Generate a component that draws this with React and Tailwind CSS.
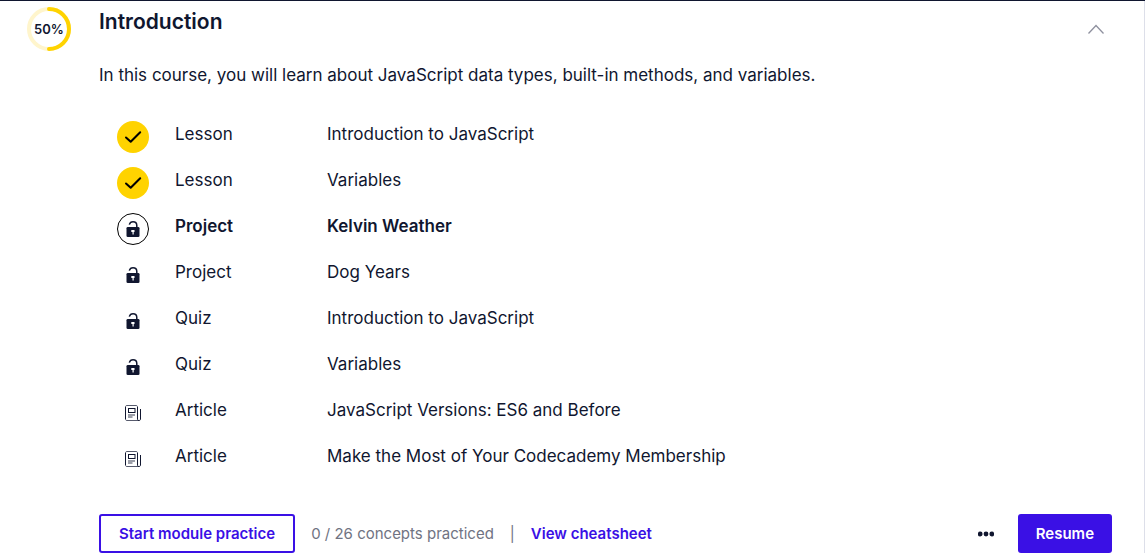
const items = [
  { kind: 'Lesson', title: 'Introduction to JavaScript', state: 'done' },
  { kind: 'Lesson', title: 'Variables', state: 'done' },
  { kind: 'Project', title: 'Kelvin Weather', state: 'current' },
  { kind: 'Project', title: 'Dog Years', state: 'open' },
  { kind: 'Quiz', title: 'Introduction to JavaScript', state: 'open' },
  { kind: 'Quiz', title: 'Variables', state: 'open' },
  { kind: 'Article', title: 'JavaScript Versions: ES6 and Before', state: 'article' },
  { kind: 'Article', title: 'Make the Most of Your Codecademy Membership', state: 'article' },
];

function ProgressRing() {
  return (
    <div className="grid size-11 shrink-0 place-items-center">
      <svg viewBox="0 0 44 44" className="col-start-1 row-start-1 size-11" fill="none" strokeWidth="4" aria-hidden="true">
        <circle cx="22" cy="22" r="20" stroke="#fff5cc" />
        <path d="M22 2a20 20 0 0 1 0 40" stroke="#ffd300" strokeLinecap="round" />
      </svg>
      <span className="col-start-1 row-start-1 text-[13px] leading-4 font-semibold">50%</span>
    </div>
  );
}

function LockIcon() {
  return (
    <svg viewBox="0 0 16 18" className="h-[18px] w-4" aria-hidden="true">
      <path d="M4.300 4.600C4.900 2.600 6.200 1.700 8 1.700c2.300 0 3.800 1.500 3.800 3.700V8" fill="none" stroke="#10162f" strokeWidth="1.500" />
      <rect x="1.500" y="7" width="13" height="10" rx="1.300" fill="#10162f" />
      <path d="M6.300 10h3.200v2h-.8v2.600H7.500V12H6.300z" fill="#fff" />
    </svg>
  );
}

function ArticleIcon() {
  return (
    <svg viewBox="0 0 18 18" className="size-[18px]" fill="none" stroke="#10162f" aria-hidden="true">
      <path d="M1.500 3v12M13.500 3v12" />
      <path d="M1.500 3c0-1 .5-1.500 1.500-1.500h9c1 0 1.500.5 1.500 1.500M1.500 15c0 1 .5 1.500 1.500 1.500h12" strokeOpacity=".7" />
      <rect x="4.500" y="4.500" width="6.500" height="4" />
      <path d="M4 11h7M4 13h4.500" strokeWidth="1.500" strokeOpacity=".55" />
      <path d="M13.500 15c0 1 .6 1.500 1.500 1.500s1.500-.5 1.500-1.500V5" />
    </svg>
  );
}

function StatusIcon({ state }) {
  if (state === 'done') {
    return (
      <span className="grid size-8 place-items-center rounded-full bg-[#ffd300]">
        <svg viewBox="0 0 32 32" className="size-8" fill="none" stroke="#000" strokeWidth="2" strokeLinecap="round" strokeLinejoin="round" aria-hidden="true">
          <path d="M9 16.500l4.700 4.300L23.200 11.200" />
        </svg>
      </span>
    );
  }
  if (state === 'current') {
    return (
      <span className="grid size-8 place-items-center rounded-full border border-black">
        <LockIcon />
      </span>
    );
  }
  return (
    <span className="grid size-8 place-items-center">
      {state === 'open' ? <LockIcon /> : <ArticleIcon />}
    </span>
  );
}

export default function App() {
  return (
    <main className="mr-px border-t border-[#10162f] bg-white font-['Inter',sans-serif] text-[17px] leading-[26px] text-[#10162f]">
      <section className="flex gap-7 border-r border-[#dddfe9] pr-8 pl-[27px]">
        <div className="pt-1.5">
          <ProgressRing />
        </div>
        <div className="min-w-0 flex-1 pt-2">
          <header className="flex items-start justify-between">
            <h2 className="text-[21px] leading-[26px] font-semibold">Introduction</h2>
            <button type="button" aria-label="Collapse module" className="mt-3 mr-2">
              <svg viewBox="0 0 16 16" className="size-4" fill="none" stroke="#8f919f" strokeWidth="1.300" aria-hidden="true">
                <path d="M.5 12.500L8 4.500l7.500 8" />
              </svg>
            </button>
          </header>
          <p className="mt-[25px]">
            In this course, you will learn about JavaScript data types, built-in methods, and variables.
          </p>
          <ul className="mt-[33px] flex flex-col gap-3.5 px-[18px]">
            {items.map((item, index) => (
              <li key={index}>
                <a
                  href="#"
                  className={
                    item.state === 'current'
                      ? 'grid grid-cols-[32px_126px_1fr] gap-x-[26px] font-semibold'
                      : 'grid grid-cols-[32px_126px_1fr] gap-x-[26px]'
                  }
                >
                  <StatusIcon state={item.state} />
                  <span>{item.kind}</span>
                  <span>{item.title}</span>
                </a>
              </li>
            ))}
          </ul>
          <footer className="mt-[39px] flex items-center text-[15px]">
            <button type="button" className="h-[39px] rounded-[3px] border-2 border-[#3a10e5] px-[18px] font-semibold whitespace-nowrap text-[#3a10e5]">
              Start module practice
            </button>
            <span className="ml-4 text-[#707382]">0 / 26 concepts practiced</span>
            <span className="mx-4 text-[#707382]">|</span>
            <a href="#" className="font-semibold text-[#3a10e5]">View cheatsheet</a>
            <button type="button" aria-label="More options" className="mr-6 ml-auto">
              <svg viewBox="0 0 16 6" className="h-1.5 w-4" fill="#10162f" aria-hidden="true">
                <circle cx="2.200" cy="3" r="2.400" />
                <circle cx="8" cy="3" r="2.400" />
                <circle cx="13.800" cy="3" r="2.400" />
              </svg>
            </button>
            <button type="button" className="h-[39px] rounded-[3px] bg-[#3a10e5] px-[18px] font-semibold text-white">
              Resume
            </button>
          </footer>
        </div>
      </section>
    </main>
  );
}
